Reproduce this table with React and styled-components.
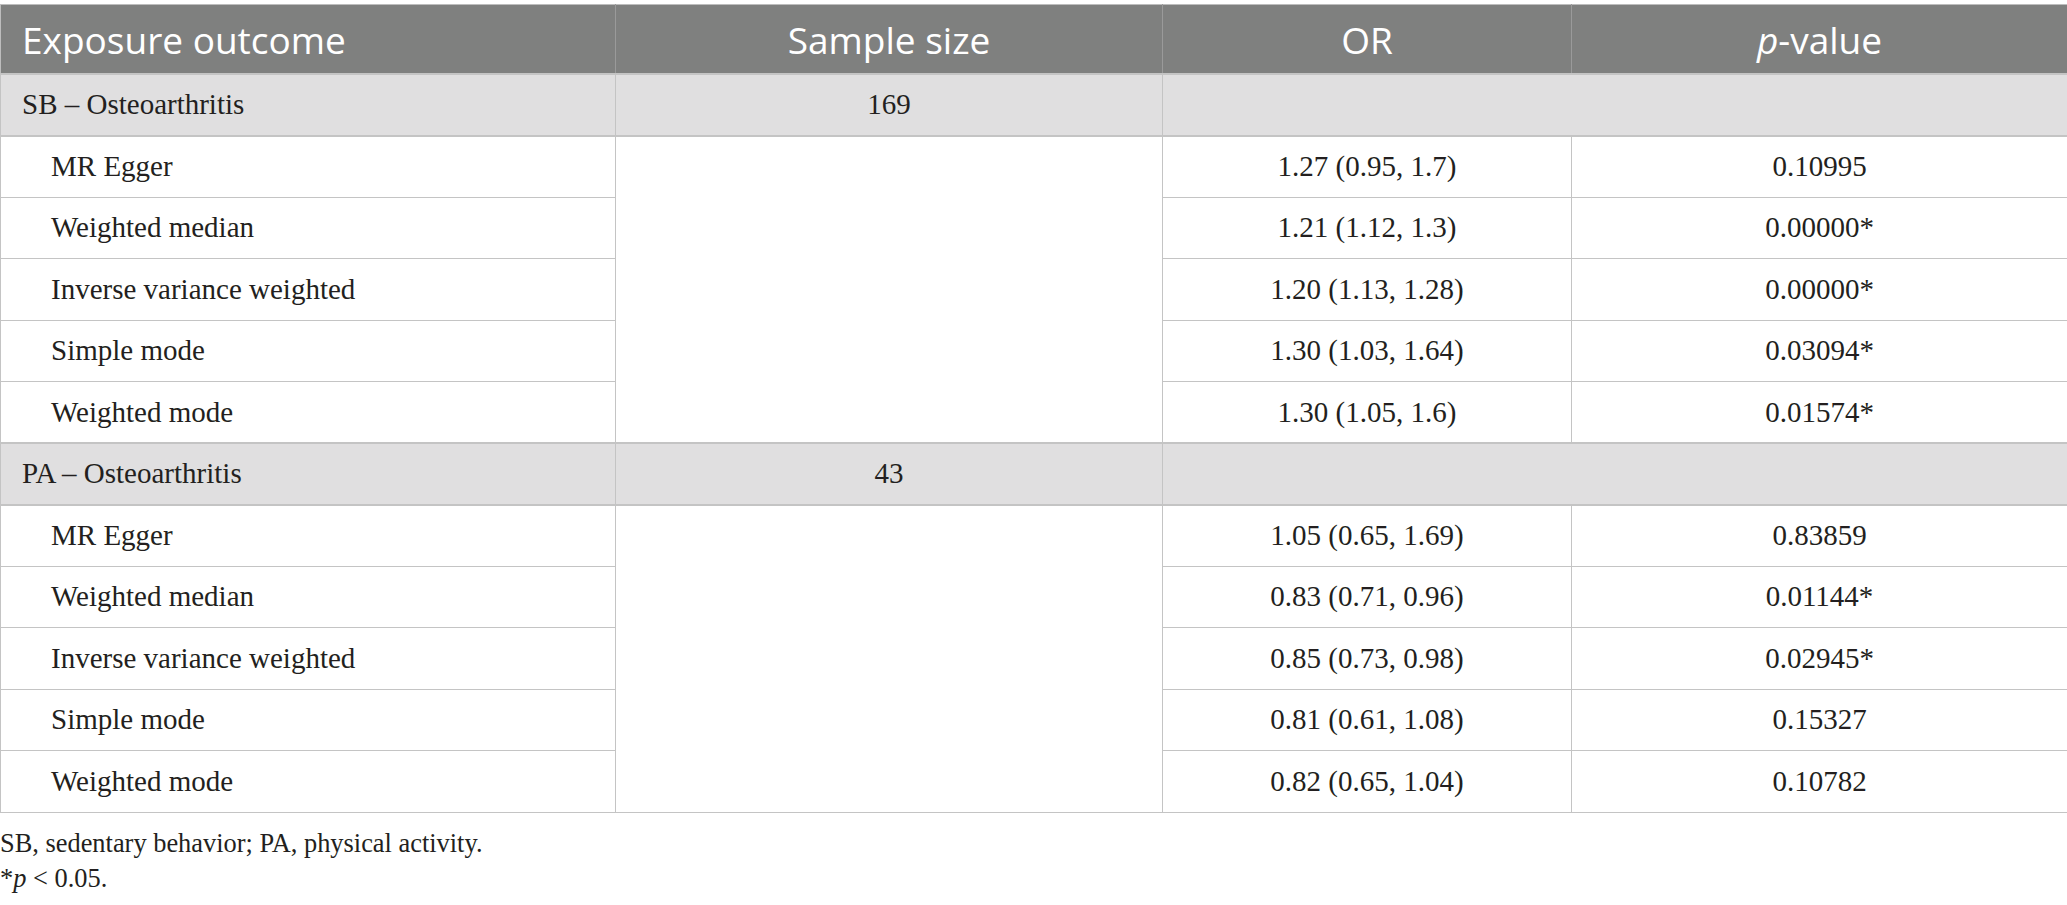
import React from "react";
import styled, { createGlobalStyle } from "styled-components";

const Global = createGlobalStyle`
  html, body { margin: 0; padding: 0; background: #ffffff; }
  body { font-family: "Liberation Serif", "Times New Roman", serif; color: #231f20; }
`;

const Page = styled.div`
  padding-top: 4px;
  width: 2067px;
`;

const Table = styled.table`
  width: 2067px;
  border-collapse: collapse;
  table-layout: fixed;
  border: 1px solid #bdbdbd;
`;

const HeadCell = styled.th`
  background: #7f807f;
  color: #ffffff;
  font-family: "Open Sans", "Noto Sans", sans-serif;
  font-weight: 400;
  font-size: 37px;
  height: 68px;
  padding: 0 0 0 ${(p) => (p.$left ? "21px" : "0")};
  text-align: ${(p) => (p.$left ? "left" : "center")};
  border-left: 1px solid #9a9a9a;
  border-bottom: 1px solid #bdbdbd;
  vertical-align: middle;
  line-height: 1;
  &:first-child { border-left: none; }
  em { font-style: italic; }
`;

const Row = styled.tr`
  height: 61.5px;
  background: ${(p) => (p.$group ? "#e0dfe0" : "#ffffff")};
`;

const Cell = styled.td`
  font-size: 29px;
  line-height: 1;
  padding: 0 0 0 ${(p) => (p.$indent ? "50px" : p.$left ? "21px" : "0")};
  text-align: ${(p) => (p.$left || p.$indent ? "left" : "center")};
  vertical-align: middle;
  border: 1px solid #c4c4c4;
  border-top-width: ${(p) => (p.$thick ? "2px" : "1px")};
  white-space: nowrap;
`;

const Notes = styled.div`
  padding-top: 13px;
  font-size: 26.4px;
  line-height: 35px;
  color: #231f20;
`;

const Note = styled.p`
  margin: 0;
`;

const groups = [
  {
    label: "SB – Osteoarthritis",
    n: "169",
    rows: [
      ["MR Egger", "1.27 (0.95, 1.7)", "0.10995"],
      ["Weighted median", "1.21 (1.12, 1.3)", "0.00000*"],
      ["Inverse variance weighted", "1.20 (1.13, 1.28)", "0.00000*"],
      ["Simple mode", "1.30 (1.03, 1.64)", "0.03094*"],
      ["Weighted mode", "1.30 (1.05, 1.6)", "0.01574*"],
    ],
  },
  {
    label: "PA – Osteoarthritis",
    n: "43",
    rows: [
      ["MR Egger", "1.05 (0.65, 1.69)", "0.83859"],
      ["Weighted median", "0.83 (0.71, 0.96)", "0.01144*"],
      ["Inverse variance weighted", "0.85 (0.73, 0.98)", "0.02945*"],
      ["Simple mode", "0.81 (0.61, 1.08)", "0.15327"],
      ["Weighted mode", "0.82 (0.65, 1.04)", "0.10782"],
    ],
  },
];

export default function App() {
  return (
    <Page>
      <Global />
      <Table>
        <colgroup>
          <col style={{ width: 615 }} />
          <col style={{ width: 547 }} />
          <col style={{ width: 409 }} />
          <col style={{ width: 496 }} />
        </colgroup>
        <thead>
          <tr>
            <HeadCell $left>Exposure outcome</HeadCell>
            <HeadCell>Sample size</HeadCell>
            <HeadCell>OR</HeadCell>
            <HeadCell>
              <em>p</em>-value
            </HeadCell>
          </tr>
        </thead>
        <tbody>
          {groups.map((g) => (
            <React.Fragment key={g.label}>
              <Row $group>
                <Cell $left $thick>{g.label}</Cell>
                <Cell $thick>{g.n}</Cell>
                <Cell colSpan={2} $thick />
              </Row>
              {g.rows.map((r, i) => (
                <Row key={r[0]}>
                  <Cell $indent $thick={i === 0}>{r[0]}</Cell>
                  {i === 0 && <Cell rowSpan={5} $thick />}
                  <Cell $thick={i === 0}>{r[1]}</Cell>
                  <Cell $thick={i === 0}>{r[2]}</Cell>
                </Row>
              ))}
            </React.Fragment>
          ))}
        </tbody>
      </Table>
      <Notes>
        <Note>SB, sedentary behavior; PA, physical activity.</Note>
        <Note>
          *<em>p</em> &lt; 0.05.
        </Note>
      </Notes>
    </Page>
  );
}
